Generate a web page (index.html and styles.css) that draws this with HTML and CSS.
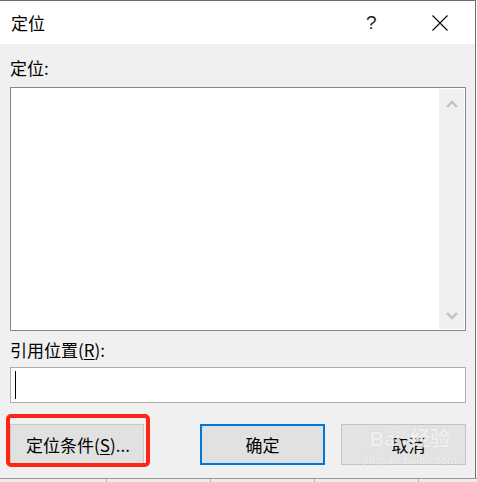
FILE: index.html
```html
<!DOCTYPE html>
<html lang="zh-CN">
<head>
<meta charset="utf-8">
<title>定位</title>
<link rel="stylesheet" href="styles.css">
</head>
<body>
<div class="window">
  <div class="titlebar">
    <span class="title">定位</span>
    <span class="help">?</span>
    <span class="close">
      <svg width="16" height="16" viewBox="0 0 16 16"><path d="M0.5 0.5L15.5 15.5M15.5 0.5L0.5 15.5" stroke="#000" stroke-width="1.1" fill="none"/></svg>
    </span>
  </div>
  <div class="content">
    <div class="label">定位:</div>
    <div class="listbox">
      <div class="list"></div>
      <div class="scrollbar">
        <svg class="arrow" width="12" height="8" viewBox="0 0 12 8"><path d="M1 7L6 2L11 7" stroke="#c2c2c2" stroke-width="2.4" fill="none"/></svg>
        <svg class="arrow" width="12" height="8" viewBox="0 0 12 8"><path d="M1 1L6 6L11 1" stroke="#c2c2c2" stroke-width="2.4" fill="none"/></svg>
      </div>
    </div>
    <div class="label label2">引用位置(<u>R</u>):</div>
    <div class="input"><span class="caret"></span></div>
    <div class="buttons">
      <div class="annotated">
        <button class="btn btn-special">定位条件(<u>S</u>)...</button>
        <span class="redbox"></span>
      </div>
      <div class="right">
        <button class="btn btn-primary">确定</button>
        <div class="cancel-wrap">
          <button class="btn btn-cancel">取消</button>
          <span class="wm"><span class="wm-big">Bai<span class="paw">●</span>经验</span><span class="wm-small">jingyan.baidu.com</span></span>
        </div>
      </div>
    </div>
  </div>
</div>
<div class="sheet">
  <span class="cell"></span><span class="cell"></span><span class="cell"></span><span class="cell"></span><span class="cell"></span>
</div>
</body>
</html>
```

FILE: styles.css
```css
html, body {
  margin: 0;
  padding: 0;
  background: #ffffff;
}
body {
  width: 477px;
  height: 482px;
  overflow: hidden;
  font-family: "Noto Sans CJK SC", "Noto Sans", sans-serif;
  color: #000;
}
.window {
  width: 475px;
  height: 477px;
  border-top: 1px solid #6e6e6e;
  border-right: 1px solid #6e6e6e;
  background: #f0f0f0;
  display: flex;
  flex-direction: column;
}
.titlebar {
  height: 43px;
  background: #ffffff;
  display: flex;
  align-items: center;
  flex-shrink: 0;
}
.title {
  font-size: 17px;
  margin-left: 11px;
  line-height: 24px;
  flex: 1;
}
.help {
  font-family: "Liberation Sans", sans-serif;
  font-size: 19px;
  line-height: 24px;
  width: 12px;
  margin-right: 54px;
  color: #222;
}
.close {
  width: 16px;
  height: 16px;
  margin-right: 27px;
  display: flex;
}
.content {
  padding: 12px 9px 0 10px;
  display: flex;
  flex-direction: column;
}
.label {
  font-size: 17px;
  line-height: 24px;
  height: 24px;
}
.label u {
  text-decoration-thickness: 1px;
  text-underline-offset: 2px;
}
.listbox {
  margin-top: 7px;
  height: 242px;
  border: 1px solid #828790;
  background: #fff;
  display: flex;
}
.list {
  flex: 1;
}
.scrollbar {
  width: 25px;
  margin: 1px 1px 1px 0;
  background: #f0f0f0;
  display: flex;
  flex-direction: column;
  justify-content: space-between;
  align-items: center;
  padding: 11px 0 9px;
  box-sizing: border-box;
}
.arrow {
  display: block;
}
.label2 {
  margin-top: 7px;
}
.input {
  margin-top: 5px;
  height: 34px;
  border: 1px solid #adadad;
  background: #fff;
  display: flex;
  align-items: center;
}
.caret {
  width: 1px;
  height: 28px;
  background: #000;
  margin-left: 4px;
}
.buttons {
  margin-top: 21px;
  display: flex;
  justify-content: space-between;
  align-items: flex-start;
}
.btn {
  font-family: "Noto Sans CJK SC", "Noto Sans", sans-serif;
  font-size: 17px;
  color: #000;
  background: #e1e1e1;
  border: 1px solid #adadad;
  height: 41px;
  padding: 0;
  margin: 0;
  display: flex;
  align-items: center;
  justify-content: center;
  box-sizing: border-box;
}
.btn u {
  text-decoration-thickness: 1px;
  text-underline-offset: 2px;
}
.annotated {
  position: relative;
}
.btn-special {
  width: 134px;
  border-color: #c8c8c8;
  padding-left: 2px;
}
.redbox {
  position: absolute;
  left: -4px;
  top: -10px;
  width: 144px;
  height: 53px;
  border: 4px solid #fe2514;
  border-radius: 5px;
  box-sizing: border-box;
}
.right {
  display: flex;
  gap: 16px;
}
.btn-primary {
  width: 125px;
  border: 2px solid #0078d7;
}
.cancel-wrap {
  position: relative;
}
.btn-cancel {
  width: 125px;
  border-color: #c4c4c4;
  background: #e3e3e3;
  padding-left: 10px;
}
.wm {
  position: absolute;
  left: 22px;
  top: 3px;
  display: flex;
  flex-direction: column;
  align-items: center;
  color: rgba(255, 255, 255, 0.7);
  text-shadow: 0 0 1px rgba(180, 180, 180, 0.5);
  pointer-events: none;
}
.wm-big {
  font-family: "Liberation Sans", "Noto Sans CJK SC", sans-serif;
  font-weight: bold;
  font-size: 20px;
  line-height: 24px;
}
.paw {
  font-size: 12px;
  margin: 0 1px;
}
.wm-small {
  font-family: "Liberation Sans", sans-serif;
  font-size: 11px;
  line-height: 12px;
  letter-spacing: 0.3px;
}
.sheet {
  height: 4px;
  border-top: 1px solid #9a9a9a;
  background: #ececec;
  display: flex;
  padding-left: 3px;
  overflow: hidden;
}
.cell {
  width: 103px;
  border-right: 1px solid #b0b0b0;
  flex-shrink: 0;
}
```
